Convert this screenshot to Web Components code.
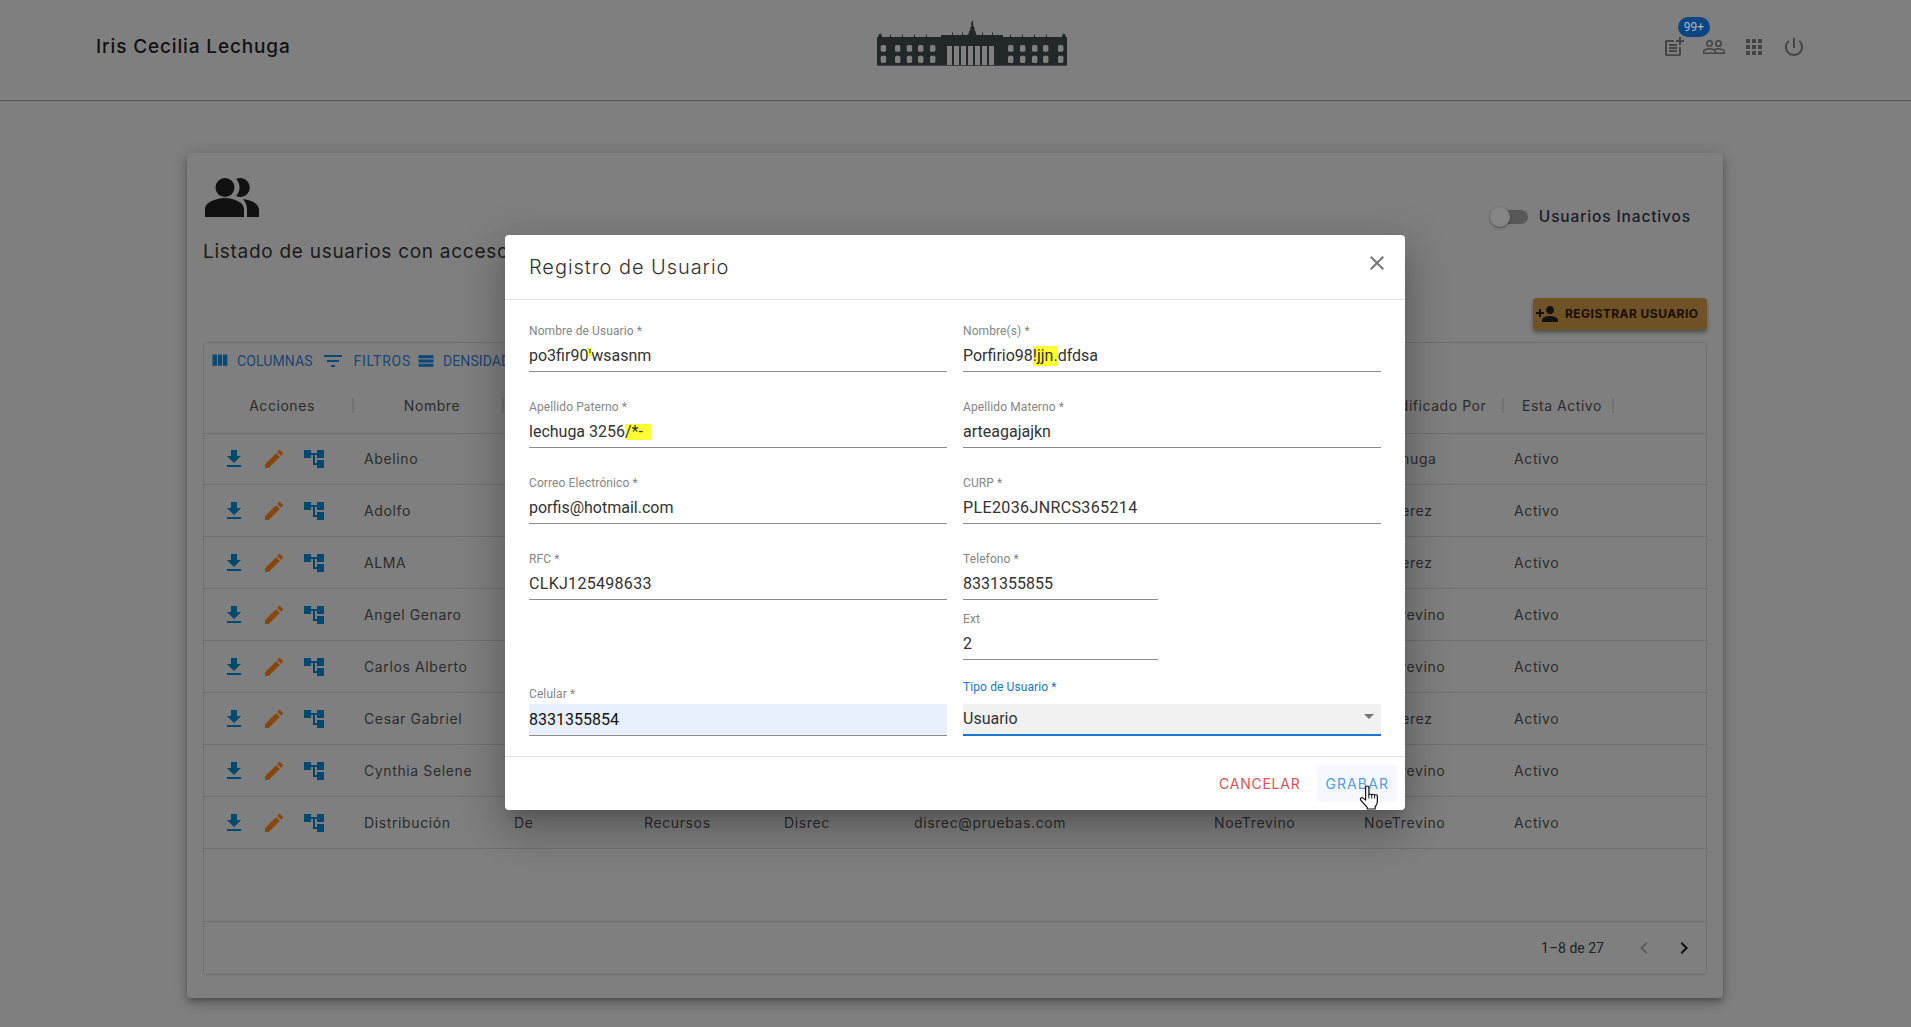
<!DOCTYPE html>
<html lang="es">
<head>
<meta charset="utf-8">
<title>Usuarios</title>
<style>
html,body{margin:0;height:1027px;overflow:hidden;background:#7f7f7f}
body{font-family:Inter,"Liberation Sans",sans-serif;color:#222}
</style>
</head>
<body>
<app-shell></app-shell>
<script>
const P={
 post:'M17 19.22H5V7h7V5H5c-1.1 0-2 .9-2 2v12c0 1.1.9 2 2 2h12c1.1 0 2-.9 2-2v-7h-2v7.22zM19 2h-2v3h-3c.01.01 0 2 0 2h3v2.99c.01.01 2 0 2 0V7h3V5h-3V2zM7 9h8v2H7zM7 12v2h8v-2H7zM7 15h8v2H7z',
 people:'M16.5 13c-1.2 0-3.07.34-4.5 1-1.43-.67-3.3-1-4.5-1C5.33 13 1 14.08 1 16.25V19h22v-2.75c0-2.17-4.33-3.25-6.5-3.25zm-4 4.5h-10v-1.25c0-.54 2.56-1.75 5-1.75s5 1.21 5 1.75v1.25zm9 0H14v-1.25c0-.46-.2-.86-.52-1.22.88-.3 1.96-.53 3.02-.53 2.44 0 5 1.21 5 1.75v1.25zM7.5 12a3.5 3.5 0 1 0 0-7 3.5 3.5 0 0 0 0 7zm0-5.5a2 2 0 1 1 0 4 2 2 0 0 1 0-4zm9 5.5a3.5 3.5 0 1 0 0-7 3.5 3.5 0 0 0 0 7zm0-5.5a2 2 0 1 1 0 4 2 2 0 0 1 0-4z',
 apps:'M4 8h4V4H4v4zm6 12h4v-4h-4v4zm-6 0h4v-4H4v4zm0-6h4v-4H4v4zm6 0h4v-4h-4v4zm6-10v4h4V4h-4zm-6 4h4V4h-4v4zm6 6h4v-4h-4v4zm0 6h4v-4h-4v4z',
 power:'M13 3h-2v10h2V3zm4.83 2.17l-1.42 1.42C17.99 7.86 19 9.81 19 12c0 3.87-3.13 7-7 7s-7-3.13-7-7c0-2.19 1.01-4.14 2.58-5.42L6.17 5.17C4.23 6.82 3 9.26 3 12c0 4.97 4.03 9 9 9s9-4.03 9-9c0-2.74-1.23-5.18-3.17-6.83z',
 add:'M15 12c2.21 0 4-1.79 4-4s-1.79-4-4-4-4 1.79-4 4 1.79 4 4 4zm-9-2V7H4v3H1v2h3v3h2v-3h3v-2H6zm9 4c-2.67 0-8 1.34-8 4v2h16v-2c0-2.66-5.33-4-8-4z',
 cols:'M10 18h5V5h-5v13zm-6 0h5V5H4v13zM16 5v13h5V5h-5z',
 filter:'M10 18h4v-2h-4v2zM3 6v2h18V6H3zm3 7h12v-2H6v2z',
 dens:'M3 5h18v3.6H3zM3 10.2h18v3.6H3zM3 15.4h18V19H3z',
 get:'M19 9h-4V3H9v6H5l7 7 7-7zM5 18v2h14v-2H5z',
 edit:'M3 17.25V21h3.75L17.81 9.94l-3.75-3.75L3 17.25zM20.71 7.04c.39-.39.39-1.02 0-1.41l-2.34-2.34c-.39-.39-1.02-.39-1.41 0l-1.83 1.83 3.75 3.75 1.83-1.83z',
 tree:'M22 11V3h-7v3H9V3H2v8h7V8h2v10h4v3h7v-8h-7v3h-2V8h2v3z',
 left:'M15.41 7.41L14 6l-6 6 6 6 1.41-1.41L10.83 12z',
 right:'M10 6L8.59 7.41 13.17 12l-4.58 4.59L10 18l6-6z',
 close:'M19 6.41L17.59 5 12 10.59 6.41 5 5 6.41 10.59 12 5 17.59 6.41 19 12 13.41 17.59 19 19 17.59 13.41 12z',
 drop:'M7 10l5 5 5-5z'
};
const ico=(n,c,s=24,x='')=>`<x-icon name="${n}" size="${s}" style="color:${c};${x}"></x-icon>`;
const def=(n,f)=>customElements.define(n,class extends HTMLElement{connectedCallback(){if(this.shadowRoot)return;this.attachShadow({mode:'open'}).innerHTML=f(this)}});

def('x-icon',e=>{const s=e.getAttribute('size')||24;return `<style>:host{display:inline-flex;flex:none;line-height:0}</style><svg width="${s}" height="${s}" viewBox="0 0 24 24" fill="currentColor" aria-hidden="true"><path d="${P[e.getAttribute('name')]}"/></svg>`});

def('app-logo',()=>{
 let w='';
 for(const x of [3.7,18,29.7,41,53,131,143,155,166,181])for(const y of [25,35.7])w+=`<rect x="${x}" y="${y}" width="5.4" height="${y==25?6.8:7.2}" rx="1.6"/>`;
 let c='';
 for(let i=0;i<7;i++)c+=`<rect x="${70+i*7}" y="26" width="5" height="20"/>`;
 let f='';
 for(const x of [13,25,37,49,133,145,157,169,75,85,105,115])f+=`<rect x="${x}" y="${x>70&&x<120?12.500:14.500}" width="1" height="3"/>`;
 return `<style>:host{display:block;width:190px;height:46px}svg{display:block}</style>
 <svg width="190" height="46" viewBox="0 0 190 46"><g fill="#22282a">
 <rect x="0" y="17" width="190" height="28.500"/><rect x="64" y="15" width="62" height="4"/>
 <path d="M90 15.500l1.500-1.500.8-3 1.300-1.500-.7-1.500 1.400-1.300-.3-3.700L96.500 0l-.5 3.700.8 3 1 1.500-.7 1.500 1.300 1.500.8 3 1.500 1.500z"/>
 <path d="M1 17l1-2-1-.5 3-1 1.200 3.500zM189 17l-1-2 1-.5-3-1-1.200 3.500z"/>${f}</g>
 <g fill="#7f7f7f">${w}${c}</g><rect y="45" width="190" height="1" fill="#3d3f40"/></svg>`});

def('app-header',()=>`<style>
 :host{display:grid;grid-template-columns:780px 190px 1fr;height:100px;padding-left:96px;padding-right:97px;border-bottom:1px solid #565656;box-sizing:content-box;align-items:start}
 .n{font:500 19px/1 Inter,sans-serif;color:#111;margin-top:37px;letter-spacing:.86px;white-space:nowrap}
 app-logo{margin-top:20px;margin-left:1px}
 .r{display:flex;justify-content:flex-end;margin-top:27px}
 .b{width:40px;height:40px;display:flex;align-items:center;justify-content:center;position:relative}
 .bd{position:absolute;left:24px;top:-10px;width:32px;height:20px;border-radius:10px;background:#0a4682;color:#aab8c6;font:12px/20px Roboto,sans-serif;text-align:center}
 </style>
 <div class="n">Iris Cecilia Lechuga</div><app-logo></app-logo>
 <div class="r"><div class="b">${ico('post','#444')}<span class="bd">99+</span></div><div class="b">${ico('people','#444')}</div><div class="b">${ico('apps','#444')}</div><div class="b">${ico('power','#444')}</div></div>`);

def('x-toggle',()=>`<style>:host{display:inline-block;width:38px;height:20px;position:relative}
 .t{position:absolute;left:1px;right:0;top:3px;height:14px;border-radius:7px;background:#585858}
 .k{position:absolute;left:0;top:0;width:20px;height:20px;border-radius:50%;background:#858585;box-shadow:0 1px 3px rgba(0,0,0,.4)}</style><div class="t"></div><div class="k"></div>`);

def('data-grid',()=>{
 const cols='150px 150px 130px 140px 130px 300px 150px 150px 110px';
 const names=['Abelino','Adolfo','ALMA','Angel Genaro','Carlos Alberto','Cesar Gabriel','Cynthia Selene','Distribución'];
 const mod=['NLechuga','AnaPerez','AnaPerez','NoeTrevino','NoeTrevino','AnaPerez','NoeTrevino','NoeTrevino'];
 const rows=names.map((n,i)=>`<div class="row" style="height:${i?52:51}px"><div class="acts"><span>${ico('get','#00486f')}</span><span>${ico('edit','#87460e')}</span><span>${ico('tree','#00486f')}</span></div><div class="c">${n}</div>${i==7?'<div class="c">De</div><div class="c">Recursos</div><div class="c">Disrec</div><div class="c">disrec@pruebas.com</div><div class="c">NoeTrevino</div>':'<div></div><div></div><div></div><div></div><div></div>'}<div class="c">${mod[i]}</div><div class="c">Activo</div></div>`).join('');
 return `<style>
 :host{display:flex;flex-direction:column;height:633px;box-sizing:border-box;border:1px solid #6f6f6f;border-radius:4px}
 .tb{height:35px;display:flex;align-items:center;flex:none;white-space:nowrap}
 .tb span{font:400 14px/1 Roboto,sans-serif;color:#1c4475;letter-spacing:.1px}
 .hd,.row{display:grid;grid-template-columns:${cols};flex:none}
 .hd{height:56px;align-items:center;border-bottom:1px solid #6f6f6f;box-sizing:border-box}
 .h{display:flex;align-items:center;justify-content:center;font:400 14px/1 Inter,sans-serif;letter-spacing:.55px;color:#2c2c2c;position:relative;height:100%;white-space:nowrap;padding-left:6px;box-sizing:border-box}
 .h.s::after{content:"";position:absolute;right:0;top:20px;width:2px;height:15px;background:#727272}
 .row{box-sizing:border-box;border-bottom:1px solid #6f6f6f;align-items:center}
 .c{font:400 14px/1 Inter,sans-serif;letter-spacing:.62px;color:#2c2c2c;padding-left:10px;white-space:nowrap}
 .acts{display:flex;padding-left:10px}
 .acts span{width:40px;display:flex;justify-content:center}
 .sp{flex:1}
 .ft{height:53px;flex:none;border-top:1px solid #6f6f6f;box-sizing:border-box;display:flex;align-items:center;justify-content:flex-end;padding-right:2px}
 .ft b{font:400 14px/1 Roboto,sans-serif;color:#222;margin-right:20px}
 .ft span{width:40px;display:flex;justify-content:center}
 </style>
 <div class="tb">${ico('cols','#0a4878',21,'margin-left:4.5px')}<span style="margin-left:7.5px">COLUMNAS</span>${ico('filter','#0a4878',24,'margin-left:8px')}<span style="margin-left:9px;letter-spacing:.75px">FILTROS</span>${ico('dens','#0a4878',20,'margin-left:5px')}<span style="margin-left:7px">DENSIDAD</span></div>
 <div class="hd"><div class="h s">Acciones</div><div class="h s">Nombre</div><div class="h s"></div><div></div><div></div><div></div><div></div><div class="h s">Modificado Por</div><div class="h s">Esta Activo</div></div>
 ${rows}<div class="sp"></div>
 <div class="ft"><b>1–8 de 27</b><span>${ico('left','#5c5c5c')}</span><span>${ico('right','#111')}</span></div>`});

def('users-card',()=>`<style>
 :host{display:block;margin:52px 0 0 187px;width:1536px;height:845px;box-sizing:border-box;padding:0 16px;background:#7f7f7f;border-radius:4px;box-shadow:0 3px 5px -1px rgba(0,0,0,.22),0 6px 10px 0 rgba(0,0,0,.16),0 1px 18px 0 rgba(0,0,0,.14)}
 .head{height:189px;display:flex;justify-content:space-between}
 .l{padding-top:25px}
 .l svg{display:block;margin-left:2px}
 h2{margin:25px 0 0;font:400 19px/1.1 Inter,sans-serif;letter-spacing:.72px;color:#1b1b1b;white-space:nowrap}
 .rr{display:flex;flex-direction:column;align-items:flex-end;padding-top:54px}
 .tg{display:flex;align-items:center;gap:11px;padding-right:16px;height:20px}
 .tg span{font:500 15.5px/1 Inter,sans-serif;letter-spacing:.86px;color:#1b1b2a}
 .btn{margin-top:71px;width:174px;height:32px;display:flex;align-items:center;background:#6f5225;border-radius:4px;box-shadow:0 3px 4px -1px rgba(0,0,0,.3),0 2px 5px rgba(0,0,0,.18);box-sizing:border-box;padding-left:2px;gap:6px}
 .btn span{font:700 12px/1 Inter,sans-serif;letter-spacing:.46px;color:#1a0e00;white-space:nowrap}
 </style>
 <div class="head"><div class="l"><svg width="54" height="39" viewBox="0 0 54 39" fill="#111"><circle cx="20" cy="9.5" r="9.5"/><path d="M0 39v-8c0-7 12-11 20-11s19 4 19 11v8zM31 1a9.5 9.5 0 1 1 0 17 12 12 0 0 0 0-17zM38 21c9 1 16 5 16 11v7H42v-8c0-4-1.500-7-4-10z"/></svg><h2>Listado de usuarios con acceso al sistema</h2></div>
 <div class="rr"><div class="tg"><x-toggle></x-toggle><span>Usuarios Inactivos</span></div><div class="btn">${ico('add','#111',24)}<span>REGISTRAR USUARIO</span></div></div></div>
 <data-grid></data-grid>`);

def('x-field',e=>{const t=e.getAttribute('tone');const pad=t?1:2;return `<style>
 :host{display:block;${e.hasAttribute('short')?'width:195px;':''}}
 label{display:block;font:400 12px/14px Roboto,sans-serif;letter-spacing:.1px;color:${t=='focus'?'#1976d2':'#868686'};white-space:nowrap;${t=='focus'?'margin-bottom:10px;':''}${t=='auto'?'margin:-1px 0 3px;':''}}
 .v{height:${t?32:34}px;box-sizing:border-box;padding-top:${pad}px;display:flex;align-items:center;font:400 16px/1 Roboto,sans-serif;color:#333;border-bottom:1px solid #8c8c8c;white-space:pre;${t=='auto'?'background:#e8f0fe;color:#111;':''}${t=='focus'?'background:#f1f1f1;border-bottom:2px solid #1976d2;justify-content:space-between;padding-top:0;':''}}
 .v ::slotted(x-icon){align-self:flex-start}
 </style><label>${e.getAttribute('label')}</label><div class="v"><slot></slot></div>`});

def('x-mark',e=>`<style>:host{display:inline;background:#ffff33;${e.hasAttribute('tall')?'padding:2px 0;':''}${e.hasAttribute('wide')?'padding-right:4px;':''}${e.hasAttribute('tick')?'background:linear-gradient(#ffff33 8px,transparent 8px);':''}}</style><slot></slot>`);

def('x-cursor',()=>`<style>:host{position:absolute;right:24px;bottom:0;width:22px;height:25px;display:block}svg{display:block}</style>
 <svg width="22" height="25" viewBox="0 0 20 24" preserveAspectRatio="none"><path fill="#fff" stroke="#111" stroke-width="1.100" stroke-linejoin="round" d="M6 2.200C6 .6 9 .6 9 2.200V9.500c0-1.200 2.600-1.200 2.600.2 0-1.200 2.600-1.200 2.600.3.2-1 2.500-.8 2.500.6V16c0 2-1 3.500-2 5v2H7.500v-1.500C6 19.500 3 16.500 1.600 14.500.5 12.800 2.400 11.300 3.800 12.600L6 14.500z"/><path stroke="#111" stroke-width=".9" d="M9 9.500V13M11.600 9.700V13M14.200 10V13"/></svg>`);

def('user-dialog',()=>`<style>
 :host{position:absolute;left:505px;top:235px;width:900px;height:575px;background:#fff;border-radius:4px;box-shadow:0 11px 15px -7px rgba(0,0,0,.2),0 24px 38px 3px rgba(0,0,0,.14),0 9px 46px 8px rgba(0,0,0,.12);display:flex;flex-direction:column;overflow:hidden}
 header{height:65px;box-sizing:border-box;flex:none;border-bottom:1px solid #e3e3e3;display:flex;align-items:flex-start;justify-content:space-between;padding:0 16px 0 24px}
 h1{margin:22px 0 0;font:300 20px/1 Inter,sans-serif;letter-spacing:.95px;color:#333}
 header x-icon{margin-top:16px}
 .form{flex:none;display:grid;grid-template-columns:418px 418px;column-gap:16px;row-gap:28px;padding:24px 24px 20px;height:456px;box-sizing:border-box;align-content:start}
 .tel{display:flex;flex-direction:column;gap:12px}
 .tipo{margin-top:-8px;align-self:end}
 footer{border-top:1px solid #e3e3e3;flex:1;display:flex;justify-content:flex-end;align-items:center;padding:0 8px;position:relative}
 button{border:0;background:none;font:400 14px/1 Inter,sans-serif;padding:0 8px;height:37px;border-radius:4px;min-width:64px}
 .c{color:#e05252;margin-right:9px;letter-spacing:.75px}
 .g{color:#559ae0;background:#f5f9fe;letter-spacing:1.1px}
 </style>
 <header><h1>Registro de Usuario</h1>${ico('close','#777')}</header>
 <div class="form">
  <x-field label="Nombre de Usuario *">po3fir90<x-mark tick>'</x-mark>wsasnm</x-field>
  <x-field label="Nombre(s) *">Porfirio98<x-mark tall>!jjn.</x-mark>dfdsa</x-field>
  <x-field label="Apellido Paterno *">lechuga 3256<x-mark wide>/*- </x-mark></x-field>
  <x-field label="Apellido Materno *">arteagajajkn</x-field>
  <x-field label="Correo Electrónico *">porfis@hotmail.com</x-field>
  <x-field label="CURP *"><span style="letter-spacing:.38px">PLE2036JNRCS365214</span></x-field>
  <x-field label="RFC *"><span style="letter-spacing:.3px">CLKJ125498633</span></x-field>
  <div class="tel"><x-field short label="Telefono *">8331355855</x-field><x-field short label="Ext">2</x-field></div>
  <x-field tone="auto" label="Celular *" style="align-self:end">8331355854</x-field>
  <x-field class="tipo" tone="focus" label="Tipo de Usuario *">Usuario<x-icon name="drop" style="color:#757575"></x-icon></x-field>
 </div>
 <footer><button class="c">CANCELAR</button><button class="g">GRABAR</button><x-cursor></x-cursor></footer>`);

def('app-shell',()=>`<style>:host{display:block;position:relative;height:1027px;overflow:hidden}</style><app-header></app-header><users-card></users-card><user-dialog></user-dialog>`);
</script>
</body>
</html>
